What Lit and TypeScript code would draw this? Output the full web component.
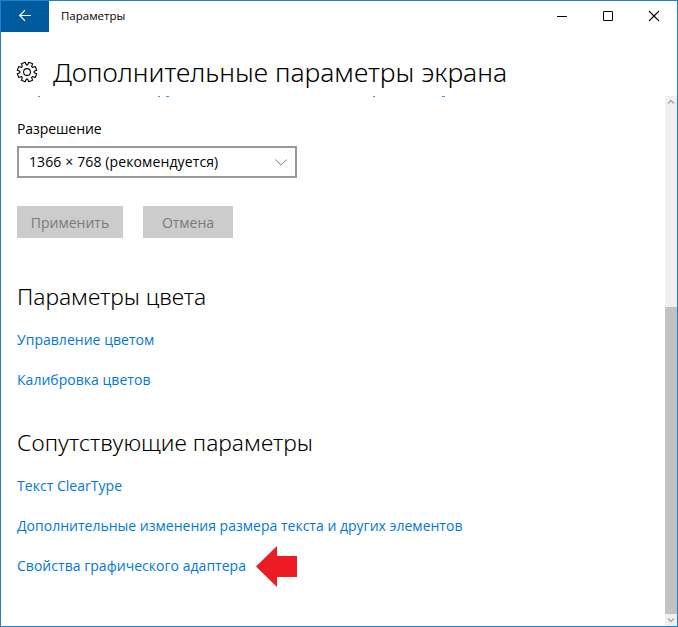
import { LitElement, html, css } from "lit";
import { customElement } from "lit/decorators.js";

const teeth = 8;
const gearPath = (() => {
  const pts: string[] = [];
  for (let i = 0; i < teeth; i++) {
    const mid = (i + 0.5) * (2 * Math.PI / teeth);
    for (const [off, r] of [[-0.3, 7.2], [-0.21, 9.9], [0.21, 9.9], [0.3, 7.2]]) {
      const a = mid + off;
      pts.push(`${(11 + r * Math.cos(a)).toFixed(2)} ${(11 + r * Math.sin(a)).toFixed(2)}`);
    }
  }
  return `M${pts.join("L")}Z`;
})();

@customElement("app-root")
export class AppRoot extends LitElement {
  static styles = css`
    :host {
      display: flex; flex-direction: column; box-sizing: border-box;
      width: 678px; height: 627px; border: 1px solid #1a80d4;
      background: #fff; color: #000; overflow: hidden;
      font: 14px/20px "Open Sans", "Noto Sans", sans-serif;
    }
    svg { display: block; flex: none; }
    .titlebar { display: flex; height: 31px; flex: none; }
    .back { width: 48px; height: 31px; background: #005a9e; }
    .caption { margin: 5px 0 0 12px; font-size: 11.5px; line-height: 20px; flex: 1; }
    .header { display: flex; height: 64px; flex: none; padding-left: 15px; }
    .gear { margin-top: 29px; }
    .title {
      margin: 20px 0 0 15px; font: 300 26.5px/40px "Noto Sans", sans-serif;
      white-space: nowrap;
    }
    .body { display: flex; flex: 1; min-height: 0; }
    .content { flex: 1; display: flex; flex-direction: column; align-items: flex-start; padding-left: 16px; }
    .remnant { height: 1px; }
    .label { margin-top: 22px; letter-spacing: -0.08px; }
    .select {
      box-sizing: border-box; width: 280px; height: 32px; margin-top: 7px; border: 2px solid #999;
      display: flex; align-items: center; justify-content: space-between;
      padding: 0 8px 0 10px; letter-spacing: 0.12px;
    }
    .buttons { display: flex; gap: 20px; margin-top: 28px; }
    .button {
      box-sizing: border-box; height: 32px; background: #ccc; color: #7a7a7a; border: 0;
      padding: 1px 0 0; font: inherit; text-align: center;
    }
    .apply { width: 106px; }
    .cancel { width: 90px; }
    h2 { margin: 43px 0 0; font: 300 22.8px/32px "Noto Sans", sans-serif; }
    h2 + .link { margin-top: 17px; }
    .second { margin-top: 37px; letter-spacing: 0.03px; }
    .link { color: #0078d7; margin-top: 20px; letter-spacing: 0.03px; white-space: nowrap; text-decoration: none; }
    .long { letter-spacing: 0.01px; }
    .callout { display: flex; align-items: flex-start; }
    .arrow { margin: 10px 0 0 10px; }
    .scroll { width: 12px; background: #f0f0f0; display: flex; flex-direction: column; }
    .thumb { width: 12px; height: 307px; background: #c2c2c2; margin-top: 199px; }
  `;

  render() {
    return html`
      <div class="titlebar">
        <svg class="back" viewBox="0 0 48 31" fill="none" stroke="#fff" stroke-width="1.2">
          <path d="M30 14.5H19M24 9.2L18.7 14.5L24 19.8"/>
        </svg>
        <div class="caption">Параметры</div>
        <svg width="138" height="31" viewBox="0 0 138 31" fill="none" stroke="#000">
          <path d="M18 15.5h10M64.5 10.5h9v9h-9z"/>
          <path d="M110 10l10 10M120 10l-10 10" stroke-width="1.1"/>
        </svg>
      </div>
      <div class="header">
        <svg class="gear" width="22" height="22" viewBox="0 0 22 22" fill="none" stroke="#000" stroke-width="1.1" stroke-linejoin="round">
          <path d=${gearPath}/><circle cx="11" cy="11" r="3.4"/>
        </svg>
        <div class="title">Дополнительные параметры экрана</div>
      </div>
      <div class="body">
        <div class="content">
          <svg class="remnant" width="460" height="1" viewBox="0 0 460 1" fill="#3b95df">
            <path d="M21 0h2v1h-2zM141 0h2v1h-2zM149 0h3v1h-3zM356 0h2v1h-2zM425 0h3v1h-3z"/>
          </svg>
          <div class="label">Разрешение</div>
          <div class="select"><span>1366 × 768 (рекомендуется)</span>
            <svg width="12" height="7" viewBox="0 0 12 7" fill="none" stroke="#777"><path d="M.3.5L6 6.2L11.7.5"/></svg>
          </div>
          <div class="buttons">
            <button class="button apply">Применить</button>
            <button class="button cancel">Отмена</button>
          </div>
          <h2>Параметры цвета</h2>
          <a class="link">Управление цветом</a>
          <a class="link">Калибровка цветов</a>
          <h2 class="second">Сопутствующие параметры</h2>
          <a class="link">Текст ClearType</a>
          <a class="link long">Дополнительные изменения размера текста и других элементов</a>
          <div class="callout">
            <a class="link">Свойства графического адаптера</a>
            <svg class="arrow" width="41" height="42" viewBox="0 0 41 42"><path d="M0 20.5L21 0V10H41V31H21V41Z" fill="#ed1c24"/></svg>
          </div>
        </div>
        <div class="scroll">
          <svg width="12" height="12" viewBox="0 0 12 12" fill="none" stroke="#a6a6a6" stroke-width="1.5"><path d="M3 7.5L6 4.5L9 7.5"/></svg>
          <div class="thumb"></div>
          <svg width="12" height="12" viewBox="0 0 12 12" fill="none" stroke="#a6a6a6" stroke-width="1.5"><path d="M3 4.5L6 7.5L9 4.5"/></svg>
        </div>
      </div>`;
  }
}
